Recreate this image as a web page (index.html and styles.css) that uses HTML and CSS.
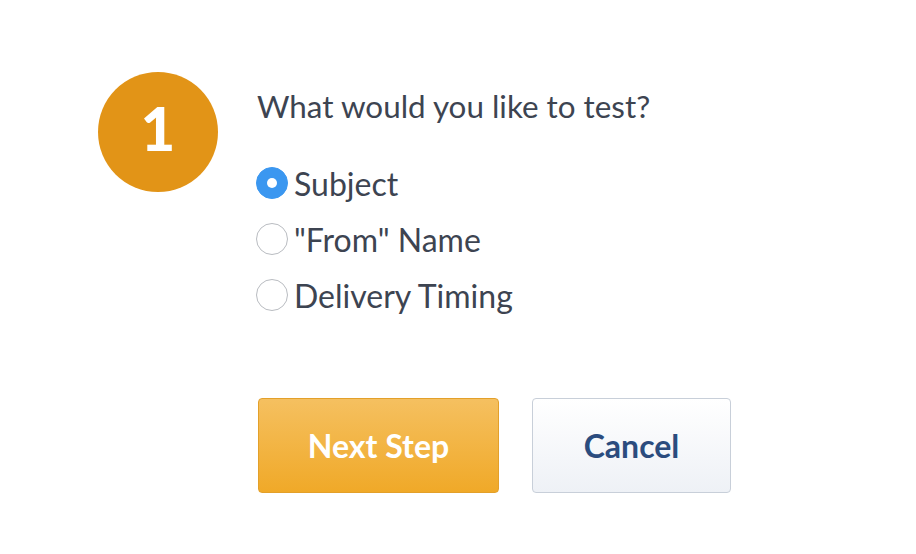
FILE: index.html
```html
<!DOCTYPE html>
<html>
<head>
<meta charset="utf-8">
<link rel="stylesheet" href="styles.css">
</head>
<body>
<div class="page">
  <div class="step">1</div>
  <div class="content">
    <h1 class="title">What would you like to test?</h1>
    <div class="options">
      <label class="option"><span class="radio checked"></span><span class="label">Subject</span></label>
      <label class="option"><span class="radio"></span><span class="label">"From" Name</span></label>
      <label class="option"><span class="radio"></span><span class="label">Delivery Timing</span></label>
    </div>
    <div class="actions">
      <button class="btn primary">Next Step</button>
      <button class="btn secondary">Cancel</button>
    </div>
  </div>
</div>
</body>
</html>
```
FILE: styles.css
```css
html, body {
  margin: 0;
  padding: 0;
  background: #ffffff;
}
body {
  font-family: Lato, "Liberation Sans", sans-serif;
  color: #3d4451;
}
.page {
  display: flex;
  align-items: flex-start;
  padding: 72px 0 0 98px;
  gap: 38px;
}
.step {
  width: 120px;
  height: 120px;
  box-sizing: border-box;
  padding-bottom: 9px;
  border-radius: 50%;
  background: #e29417;
  color: #fff;
  font-size: 60px;
  font-weight: 900;
  display: flex;
  align-items: center;
  justify-content: center;
  flex-shrink: 0;
}
.content {
  display: flex;
  flex-direction: column;
}
.title {
  margin: 16px 0 0 1px;
  font-size: 31.4px;
  font-weight: 400;
  line-height: 36px;
}
.options {
  display: flex;
  flex-direction: column;
  margin-top: 31px;
}
.option {
  display: flex;
  align-items: center;
  height: 56px;
  gap: 6px;
  font-size: 32px;
}
.radio {
  width: 30px;
  height: 30px;
  border-radius: 50%;
  border: 1px solid #b9bcc1;
  background: #fff;
  box-sizing: content-box;
  display: flex;
  align-items: center;
  justify-content: center;
}
.radio.checked {
  border-color: #3b97f0;
  background: #3b97f0;
}
.radio.checked::after {
  content: "";
  width: 10px;
  height: 10px;
  border-radius: 50%;
  background: #fff;
}
.actions {
  display: flex;
  gap: 33px;
  margin-top: 75px;
  margin-left: 2px;
}
.btn {
  height: 95px;
  border-radius: 4px;
  font-family: Lato, "Liberation Sans", sans-serif;
  font-size: 32px;
  font-weight: 700;
  cursor: pointer;
}
.primary {
  width: 241px;
  background: linear-gradient(#f5c060, #f0a928);
  border: 1px solid #e3a02a;
  color: #fff;
}
.secondary {
  width: 199px;
  background: linear-gradient(#ffffff, #eef1f6);
  border: 1px solid #c8cfd9;
  color: #2b4c7e;
}
```
